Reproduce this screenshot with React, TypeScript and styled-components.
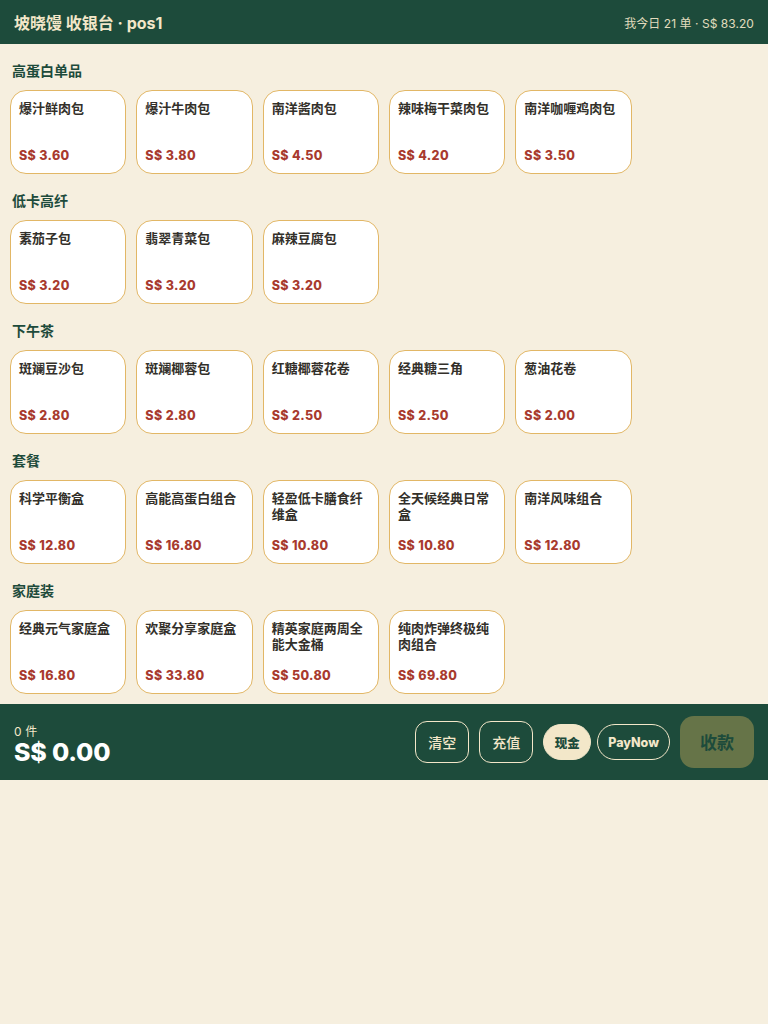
import React from "react";
import styled, { createGlobalStyle } from "styled-components";

const Global = createGlobalStyle`
  html, body { margin: 0; padding: 0; background: #f6efdf; }
  body { font-family: Inter, "Noto Sans CJK SC", sans-serif; }
  * { box-sizing: border-box; }
`;
const Header = styled.header`
  height: 44px; background: #1d4b3b; color: #f3e7c9; display: flex;
  align-items: center; justify-content: space-between; padding: 0 14px;
`;
const Title = styled.div`font-size: 16px; font-weight: 700;`;
const Stats = styled.div`font-size: 12px; opacity: 0.92; letter-spacing: 0.05px;`;
const Main = styled.main`padding: 10px 10px 10px; display: flex; flex-direction: column; gap: 10px;`;
const Section = styled.section`display: flex; flex-direction: column;`;
const SectionTitle = styled.h2`
  margin: 0; padding: 7px 2px; font-size: 14px; line-height: 20px; height: 36px;
  font-weight: 700; color: #1d4b3b;
`;
const Grid = styled.div`display: grid; grid-template-columns: repeat(6, 1fr); gap: 10px;`;
const Card = styled.button`
  height: 84px; background: #fff; border: 1px solid #e2b766; border-radius: 16px;
  padding: 9px 8px 8px; display: flex; flex-direction: column; justify-content: space-between;
  text-align: left; font-family: inherit;
`;
const Name = styled.div`font-size: 13px; line-height: 16px; font-weight: 700; color: #33302a;`;
const Price = styled.div`font-size: 12.5px; line-height: 16px; font-weight: 800; color: #a83a2e; letter-spacing: 0.35px; margin-bottom: 1px;`;
const Footer = styled.footer`
  height: 76px; background: #1d4b3b; display: flex; align-items: center;
  justify-content: space-between; padding: 0 14px;
`;
const Totals = styled.div`display: flex; flex-direction: column; padding-top: 6px;`;
const Count = styled.div`font-size: 12px; line-height: 13px; color: #f3e7c9; letter-spacing: 0.2px;`;
const Total = styled.div`font-size: 25px; line-height: 28px; font-weight: 800; letter-spacing: -0.2px; color: #fff;`;
const Actions = styled.div`display: flex; align-items: center; gap: 10px;`;
const Ghost = styled.button`
  height: 42px; width: 54px; background: transparent; border: 1px solid #f3e7c9; border-radius: 12px;
  color: #f3e7c9; font-size: 14px; font-weight: 500; font-family: inherit; padding: 0;
`;
const Pays = styled.div`display: flex; gap: 6px;`;
const Pay = styled.button<{ $active?: boolean }>`
  height: 36px; min-width: 48px; padding: 0 10px; border-radius: 18px; border: 1px solid #f3e7c9;
  background: ${p => (p.$active ? "#f3e7c9" : "transparent")};
  color: ${p => (p.$active ? "#1d4b3b" : "#f3e7c9")};
  font-size: 12.5px; font-weight: 800; font-family: inherit;
`;
const Charge = styled.button`
  width: 74px; height: 52px; border: 0; border-radius: 14px; background: #667448;
  color: #1d4b3b; font-size: 17px; font-weight: 700; font-family: inherit; padding: 0 0 2px;
`;

const data: [string, [string, string][]][] = [
  ["高蛋白单品", [["爆汁鲜肉包", "3.60"], ["爆汁牛肉包", "3.80"], ["南洋酱肉包", "4.50"], ["辣味梅干菜肉包", "4.20"], ["南洋咖喱鸡肉包", "3.50"]]],
  ["低卡高纤", [["素茄子包", "3.20"], ["翡翠青菜包", "3.20"], ["麻辣豆腐包", "3.20"]]],
  ["下午茶", [["斑斓豆沙包", "2.80"], ["斑斓椰蓉包", "2.80"], ["红糖椰蓉花卷", "2.50"], ["经典糖三角", "2.50"], ["葱油花卷", "2.00"]]],
  ["套餐", [["科学平衡盒", "12.80"], ["高能高蛋白组合", "16.80"], ["轻盈低卡膳食纤维盒", "10.80"], ["全天候经典日常盒", "10.80"], ["南洋风味组合", "12.80"]]],
  ["家庭装", [["经典元气家庭盒", "16.80"], ["欢聚分享家庭盒", "33.80"], ["精英家庭两周全能大金桶", "50.80"], ["纯肉炸弹终极纯肉组合", "69.80"]]],
];

export default function App() {
  return (
    <>
      <Global />
      <Header>
        <Title>坡晓馒 收银台 · pos1</Title>
        <Stats>我今日 21 单 · S$ 83.20</Stats>
      </Header>
      <Main>
        {data.map(([title, items]) => (
          <Section key={title}>
            <SectionTitle>{title}</SectionTitle>
            <Grid>
              {items.map(([n, p]) => (
                <Card key={n}>
                  <Name>{n}</Name>
                  <Price>S$ {p}</Price>
                </Card>
              ))}
            </Grid>
          </Section>
        ))}
      </Main>
      <Footer>
        <Totals>
          <Count>0 件</Count>
          <Total>S$ 0.00</Total>
        </Totals>
        <Actions>
          <Ghost>清空</Ghost>
          <Ghost>充值</Ghost>
          <Pays>
            <Pay $active>现金</Pay>
            <Pay>PayNow</Pay>
          </Pays>
          <Charge>收款</Charge>
        </Actions>
      </Footer>
    </>
  );
}
